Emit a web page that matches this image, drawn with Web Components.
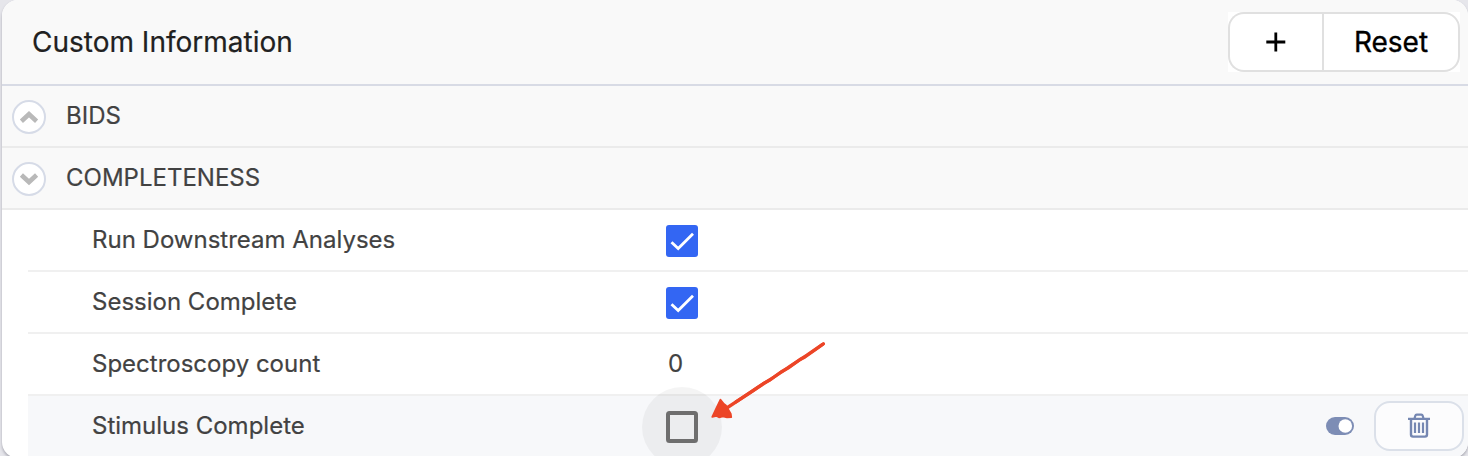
<!DOCTYPE html>
<html lang="en">
<head>
<meta charset="utf-8">
<title>Custom Information</title>
<style>
html,body{margin:0;width:1468px;height:456px;overflow:hidden;background:#e6e6eb;font-family:Inter,"Liberation Sans",sans-serif}
</style>
</head>
<body>
<info-panel>
  <info-header>Custom Information<button-group slot="actions"></button-group></info-header>
  <info-section>BIDS</info-section>
  <info-section open>COMPLETENESS</info-section>
  <info-row label="Run Downstream Analyses"><check-box checked></check-box></info-row>
  <info-row label="Session Complete"><check-box checked></check-box></info-row>
  <info-row label="Spectroscopy count"><span style="padding-left:2px">0</span></info-row>
  <info-row label="Stimulus Complete" active><check-box></check-box><row-actions slot="actions"></row-actions></info-row>
</info-panel>
<pointer-arrow></pointer-arrow>
<script>
const define = (name, markup, setup) => customElements.define(name, class extends HTMLElement {
  constructor() { super(); this.attachShadow({mode: 'open'}); }
  connectedCallback() { this.shadowRoot.innerHTML = markup; if (setup) setup(this, this.shadowRoot); }
});

define('info-panel', `<style>
:host{display:flex;flex-direction:column;box-sizing:border-box;height:458px;margin-left:2px;background:#fff;border-radius:16px;overflow:hidden;box-shadow:0 2px 3px #a8a8b2;-webkit-text-stroke:.2px currentColor}
</style><slot></slot>`);

define('info-header', `<style>
:host{display:flex;box-sizing:border-box;height:86px;flex:none;align-items:center;justify-content:space-between;padding:0 8px 0 30px;background:#f9f9f9;border-bottom:2px solid #d8dbe5;color:#212121;font-size:28px;line-height:34px}
</style><span class="title"><slot></slot></span><slot name="actions"></slot>`);

define('button-group', `<style>
:host{display:flex;background:#fff;color:#000;width:232px;height:60px}
button{all:unset;box-sizing:border-box;display:flex;align-items:center;justify-content:center;height:60px;border:2px solid #e0e0e0;font-size:28px}
.add{width:94px;border-right:0;border-radius:16px 0 0 16px}
.reset{width:138px;border-radius:0 16px 16px 0;-webkit-text-stroke:.35px #000}
svg{display:block}
</style><button class="add" aria-label="Add"><svg width="20" height="20"><path d="M9.8 .5v19M.3 10h19" stroke="#000" stroke-width="2.8"/></svg></button><button class="reset">Reset</button>`);

define('info-section', `<style>
:host{display:flex;box-sizing:border-box;height:62px;flex:none;align-items:center;gap:20px;padding-left:10px;background:#f9f9f9;border-bottom:2px solid #ebebeb;color:#424242;font-size:24px;line-height:30px}
svg{display:block;margin-top:2px}
</style><svg width="34" height="34"><circle cx="17" cy="17" r="16" fill="#fff" stroke="#d6dbe7" stroke-width="2"/><path fill="none" stroke="#b9b9b9" stroke-width="4.6"/></svg><span class="name"><slot></slot></span>`,
(host, root) => root.querySelector('path').setAttribute('d', host.hasAttribute('open') ? 'M9.4 13L17 20L24.6 13' : 'M9.4 21.2L17 14.2L24.6 21.2'));

define('info-row', `<style>
:host{display:flex;box-sizing:border-box;height:62px;flex:none;align-items:center;margin-left:26px;padding-left:64px;border-bottom:2px solid #f0f0f0;color:#424242;font-size:24px;line-height:30px}
:host([active]){background:#f7f8fa}
.label{width:574px}
.value{display:flex;align-items:center;flex:1;height:34px}
</style><span class="label"></span><div class="value"><slot></slot></div><slot name="actions"></slot>`,
(host, root) => root.querySelector('.label').textContent = host.getAttribute('label'));

define('check-box', `<style>
:host{display:block;position:relative;width:32px;height:32px;margin-top:2px}
svg{display:block;position:relative}
.halo{position:absolute;left:-24px;top:-24px;width:80px;height:80px;border-radius:50%;background:rgba(0,0,0,.042)}
</style><div class="box"></div>`,
(host, root) => root.querySelector('.box').innerHTML = host.hasAttribute('checked')
  ? '<svg width="32" height="32"><rect width="32" height="32" rx="3" fill="#3366f3"/><path d="M5.5 17.2L12.2 23.6L27 8.7" fill="none" stroke="#fff" stroke-width="2.8"/></svg>'
  : '<div class="halo"></div><svg width="32" height="32"><rect x="2" y="2" width="28" height="28" rx="1.5" fill="none" stroke="#6e6e6e" stroke-width="4"/></svg>');

define('row-actions', `<style>
:host{display:flex;align-items:center;gap:20px;padding-right:4px}
svg{display:block}
.delete{all:unset;box-sizing:border-box;display:flex;align-items:center;justify-content:center;width:90px;height:50px;border:2px solid #dbe0e9;border-radius:16px;background:#fcfcfd}
</style><svg width="28" height="18"><rect width="28" height="18" rx="9" fill="#7d8db5"/><circle cx="19.3" cy="9" r="6.8" fill="#fff"/></svg>
<button class="delete" aria-label="Delete"><svg width="22" height="26" fill="none" stroke="#7587b2"><path d="M0 5.8h22" stroke-width="2.2"/><path d="M6.6 5.3l.6-2.4q.3-1.2 1.5-1.2h4.6q1.2 0 1.5 1.2l.6 2.4" stroke-width="2.2"/><path d="M3 6v15.6q0 2 2 2h12q2 0 2-2V6" stroke-width="2.4"/><path d="M7 9.5v10.5M11 9.5v10.5M15 9.5v10.5" stroke-width="2.2"/></svg></button>`);

define('pointer-arrow', `<style>
:host{display:block;position:absolute;left:708px;top:338px}
svg{display:block}
</style><svg width="122" height="84" fill="none" stroke="#ec4527" stroke-linejoin="round" stroke-linecap="round"><path d="M114.6 6.4L99 17L83 27.6L66 39L49 50L33 60.6L18 70.5" stroke-width="3.3"/><path d="M115.4 5.8L110 9.8L97 19L92 21.5L80 30.1L73 34L62 42L55 45.7L44 53.4L28 63.9" stroke-width="3.2"/><path d="M12.4 61.6L9 68.5L4.2 78.9L8.5 78L11 79.4L15 78.5L19 79.4L23.3 79.2L22.9 76L18 67.5L16 66Z" fill="#ec4527" stroke-width="1.6"/></svg>`);
</script>
</body>
</html>
